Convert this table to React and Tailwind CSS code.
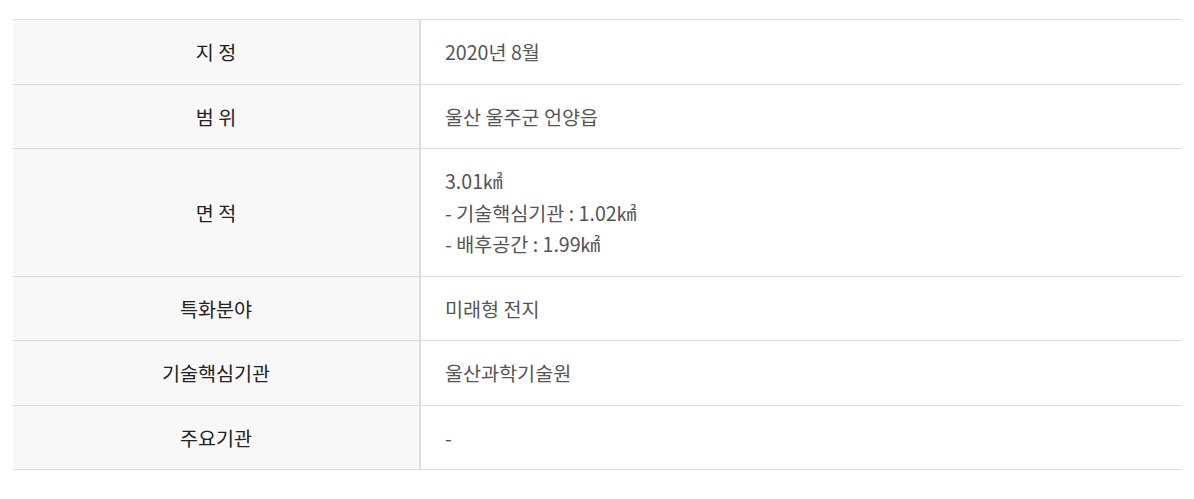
const rows = [
  { label: "지 정", value: ["2020년 8월"] },
  { label: "범 위", value: ["울산 울주군 언양읍"] },
  { label: "면 적", value: ["3.01㎢", "- 기술핵심기관 : 1.02㎢", "- 배후공간 : 1.99㎢"] },
  { label: "특화분야", value: ["미래형 전지"] },
  { label: "기술핵심기관", value: ["울산과학기술원"] },
  { label: "주요기관", value: ["-"] },
];

export default function App() {
  return (
    <div className="min-h-screen bg-white pt-[19px] pl-[13px] pr-[12px] font-['Noto_Sans_CJK_KR',sans-serif]">
      <table className="w-full border-collapse text-[19.6px] leading-[31.5px]">
        <tbody>
          {rows.map((row) => (
            <tr key={row.label} className="border-y border-[#dddddd]">
              <th className="w-[407px] bg-[#f8f8f8] py-4 text-center font-normal text-[#222222]">
                {row.label}
              </th>
              <td className="border-l-2 border-[#dddddd] py-4 pl-6 text-[#555555]">
                {row.value.map((line) => (
                  <div key={line}>{line}</div>
                ))}
              </td>
            </tr>
          ))}
        </tbody>
      </table>
    </div>
  );
}
